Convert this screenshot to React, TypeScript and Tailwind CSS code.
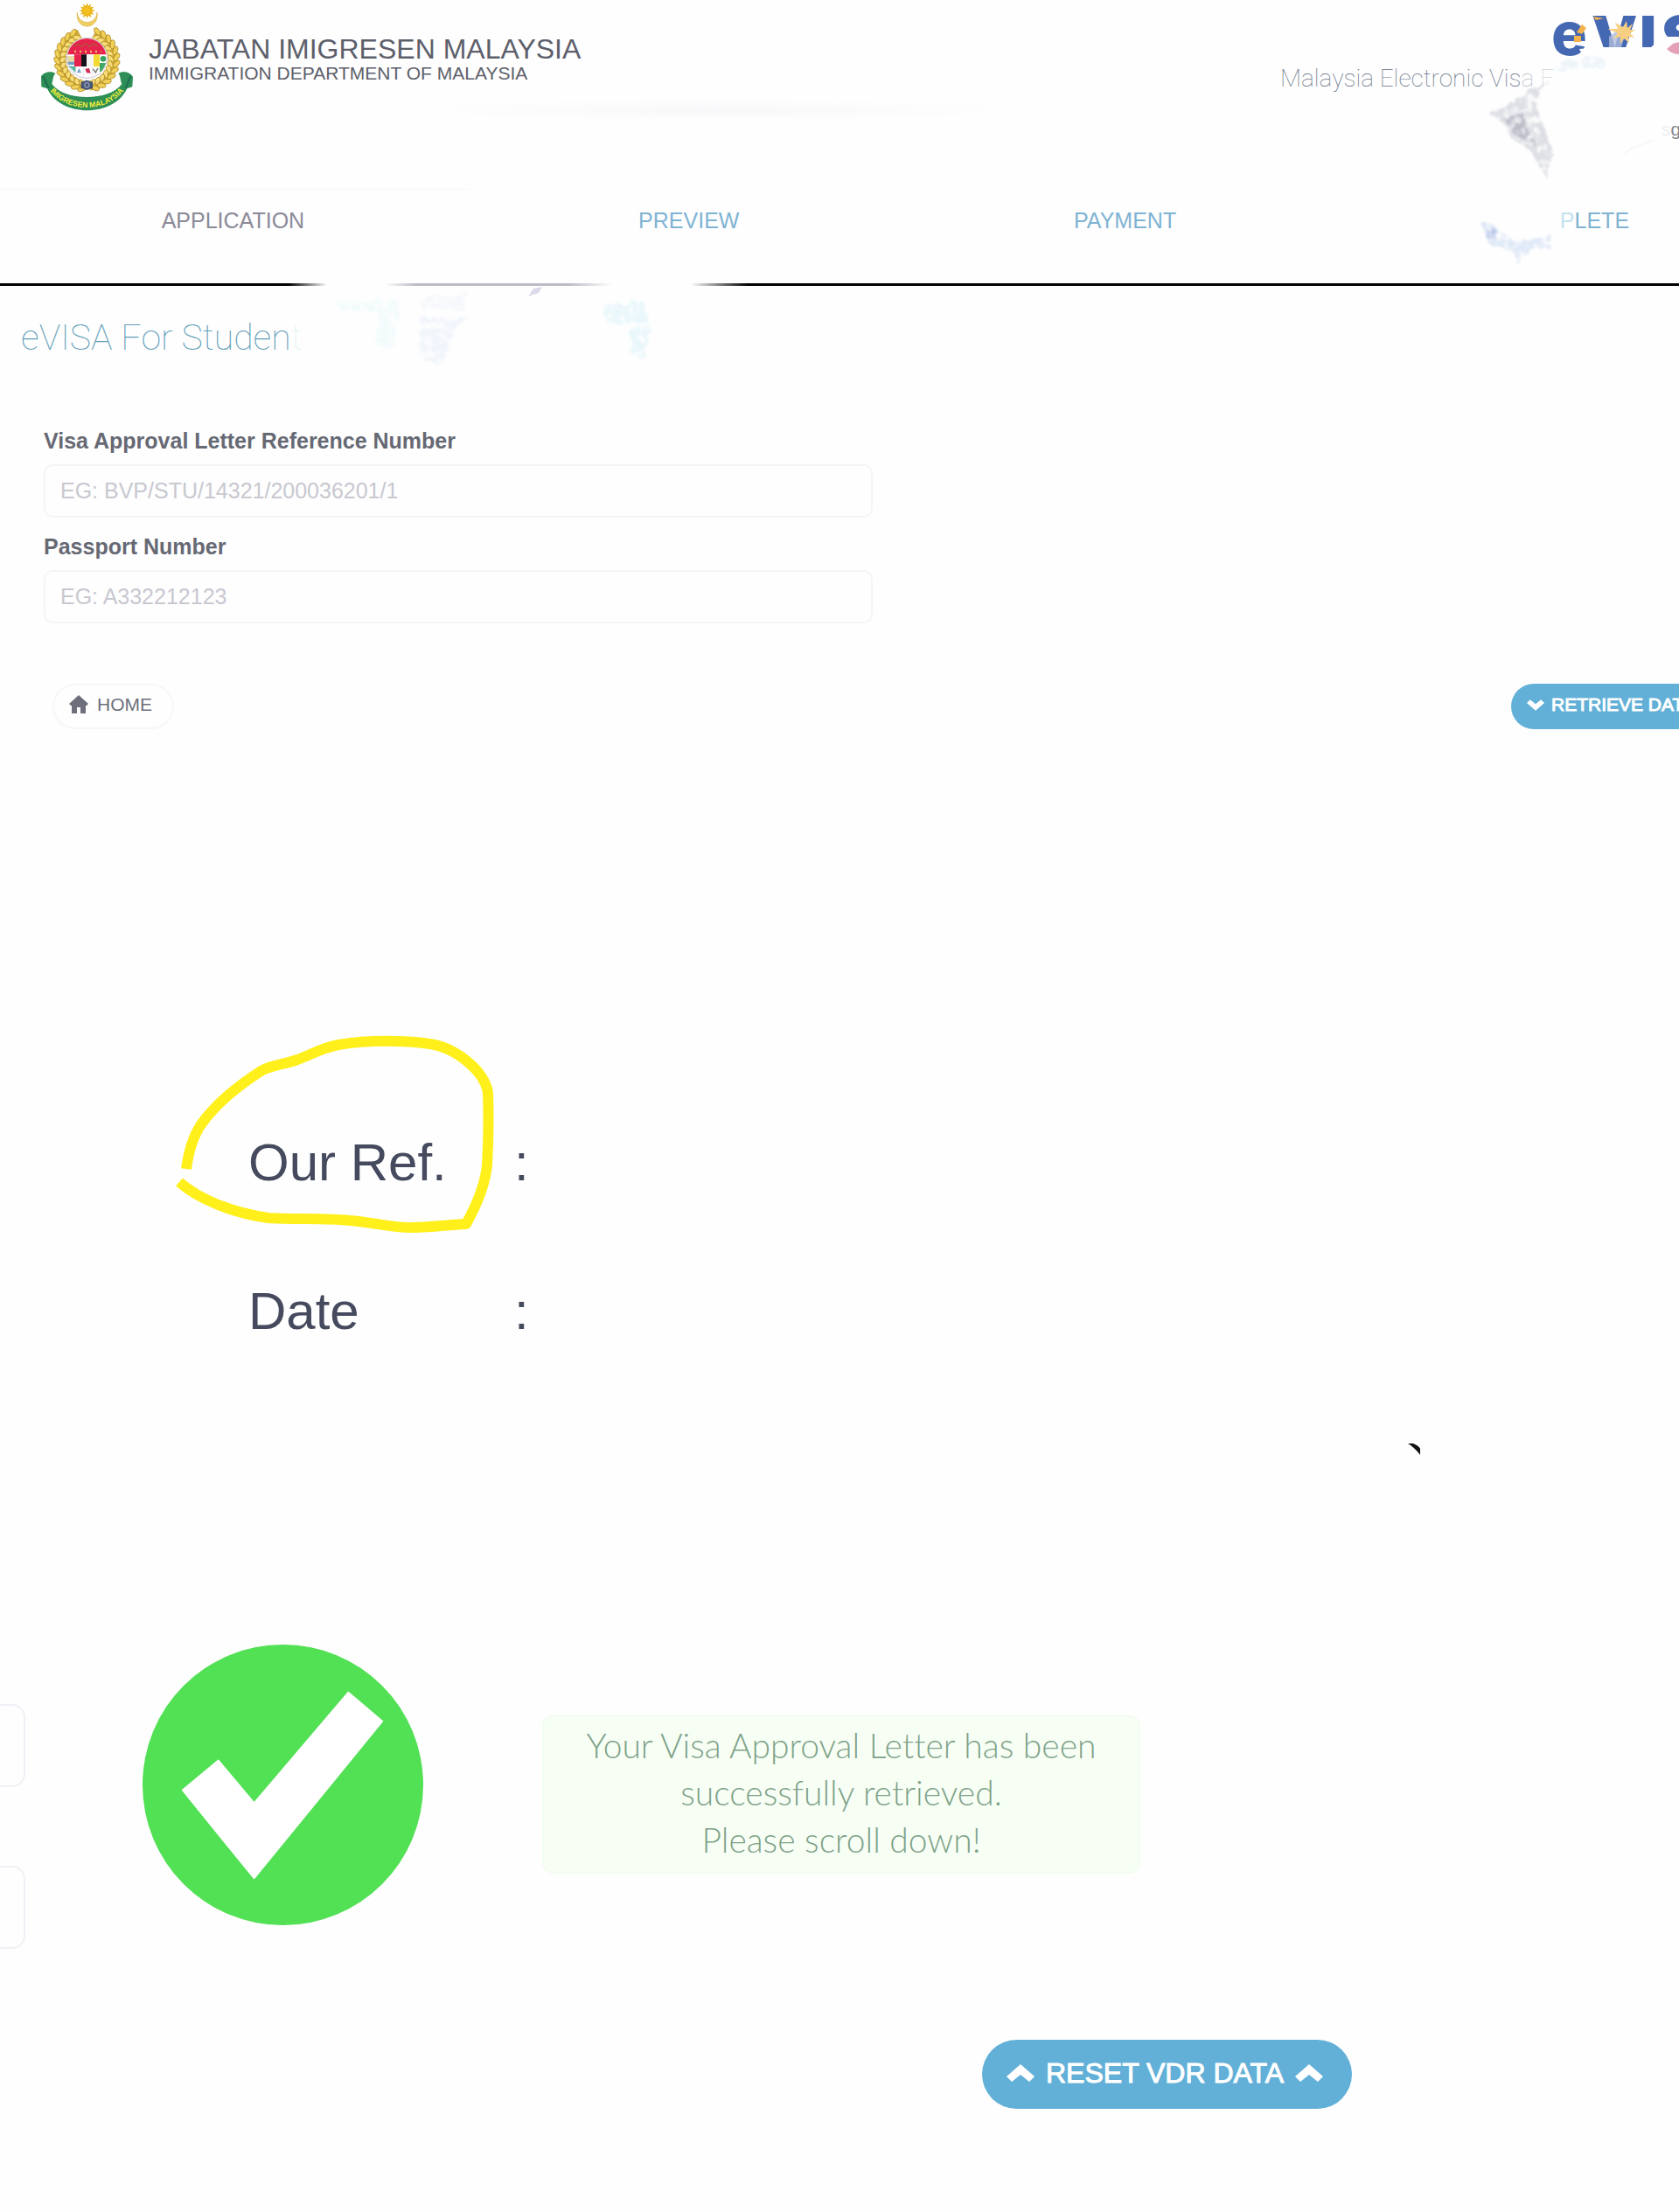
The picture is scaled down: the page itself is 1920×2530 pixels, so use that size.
import type { ReactNode } from "react";

type Step = {
  label: ReactNode;
  className: string;
};

const steps: Step[] = [
  { label: "APPLICATION", className: "text-[#8b8a98]" },
  { label: "PREVIEW", className: "text-[#7fb3d3]" },
  { label: "PAYMENT", className: "text-[#7fb3d3]" },
  {
    label: (
      <>
        <span className="text-[#c4e2ee]">P</span>LETE
      </>
    ),
    className: "pl-[62px] text-[#7fb3d3]"
  }
];

const fields = [
  {
    id: "reference",
    label: "Visa Approval Letter Reference Number",
    placeholder: "EG: BVP/STU/14321/200036201/1"
  },
  {
    id: "passport",
    label: "Passport Number",
    placeholder: "EG: A332212123"
  }
];

const letterRows = ["Our Ref.", "Date"];

// degrees, clockwise from the top, leaving the wreath open under the crescent
const leafAngles = [
  24, 37, 50, 63, 76, 89, 102, 115, 128, 141, 154, 167, 193, 206, 219, 232, 245,
  258, 271, 284, 297, 310, 323, 336
];

const rayAngles = [0, 30, 60, 90, 120, 150, 180, 210, 240, 270, 300, 330];

function Emblem() {
  return (
    <svg
      aria-label="Imigresen Malaysia"
      className="h-[140px] w-[140px] shrink-0"
      role="img"
      viewBox="0 0 420 420"
    >
      <defs>
        <clipPath id="shield">
          <circle cx="208" cy="199" r="67" />
        </clipPath>
        <path d="M66 288C124 396 292 396 350 288" id="motto" />
      </defs>
      <path
        d="M175 43C166 106 252 106 243 43C240 88 178 88 175 43Z"
        fill="#f0cf62"
        stroke="#d9b040"
        strokeWidth="2"
      />
      <circle cx="209" cy="37" fill="#f3c01f" r="15" />
      {rayAngles.map((angle) => (
        <path
          d="M203 25L209 10L215 25Z"
          fill="#eab61c"
          key={angle}
          transform={`rotate(${angle} 209 37)`}
        />
      ))}
      {leafAngles.map((angle) => (
        <g key={angle} transform={`rotate(${angle} 208 204)`}>
          <rect fill="#d3ab38" height="32" width="26" x="195" y="98" />
          <ellipse
            cx="202"
            cy="102"
            fill="#efcf55"
            rx="15"
            ry="8"
            stroke="#a37d1c"
            strokeWidth="2"
            transform={angle < 180 ? "rotate(32 202 102)" : "rotate(-32 202 102)"}
          />
          <ellipse
            cx="208"
            cy="122"
            fill="#f6dd78"
            rx="14"
            ry="8"
            stroke="#a8841f"
            strokeWidth="2"
            transform={angle < 180 ? "rotate(-32 208 122)" : "rotate(32 208 122)"}
          />
        </g>
      ))}
      <circle cx="208" cy="199" fill="#fff" r="69" stroke="#c9c4ce" strokeWidth="3" />
      <g clipPath="url(#shield)">
        <path d="M140 130H276V187H140Z" fill="#e6224d" />
        <path d="M165 160L178 150L190 161L203 148L217 160L232 149L246 160" fill="none" stroke="#b5563f" strokeWidth="4" />
        <path d="M165 177H257" stroke="#f0b35f" strokeDasharray="6 12" strokeWidth="7" />
        <path d="M140 192H165V222H140Z" fill="#e9d9a4" />
        <path d="M140 212H165V222H140Z" fill="#6f9ecb" />
        <path d="M165 187H189V228H165Z" fill="#e6224d" />
        <path d="M189 187H207V228H189Z" fill="#16121a" />
        <path d="M207 187H231V228H207Z" fill="#f6f5f2" />
        <path d="M231 187H252V228H231Z" fill="#f6d930" />
        <circle cx="264" cy="202" fill="#36a35c" r="10" />
        <path d="M252 216H276V246H252Z" fill="#3fa864" />
        <path d="M144 226L170 250V228Z" fill="#58b6a3" />
        <path d="M174 250L181 233L189 250Z" fill="#7ea2cf" />
        <path d="M202 236L216 234L221 251L207 250Z" fill="#cf2f56" />
        <path d="M229 236L238 249L246 234" fill="none" stroke="#8b8d86" strokeWidth="5" />
        <path d="M170 228V270M197 228V270M226 228V270" stroke="#d8d8de" strokeWidth="2" />
      </g>
      <path d="M188 280H228V304H188Z" fill="#3d4a68" />
      <circle cx="208" cy="292" fill="#4b5a7a" r="17" />
      <circle cx="208" cy="292" fill="none" r="8" stroke="#b4bfd3" strokeWidth="3" />
      <path
        d="M51 262C60 246 88 242 100 252C92 258 92 276 88 288C130 348 286 348 328 288C322 276 324 258 316 252C328 242 358 246 366 264L364 298L346 304C300 404 118 404 72 304L52 298Z"
        fill="#2d8f55"
      />
      <path d="M58 262C68 272 64 286 78 302M358 262C350 272 352 286 340 302" fill="none" stroke="#1f6b52" strokeWidth="6" />
      <text
        className="font-['Liberation_Sans'] font-bold"
        fill="#f2ee3c"
        fontSize="26"
      >
        <textPath href="#motto" startOffset="50%" textAnchor="middle">
          IMIGRESEN MALAYSIA
        </textPath>
      </text>
    </svg>
  );
}

function EvisaLogo() {
  return (
    <svg
      aria-label="eVISA"
      className="ml-[312px] h-[70px] w-[180px]"
      role="img"
      viewBox="0 0 180 70"
    >
      <defs>
        <clipPath id="logo-cut">
          <path d="M40 0H180V42H126L112 54H40Z" />
        </clipPath>
      </defs>
      <text className="font-['Inter'] font-extrabold" fill="#4568b2" fontSize="68" x="-2" y="63">
        e
      </text>
      <path d="M27 37L33 28L38 32L33 39Z" fill="#f3b24c" />
      <path d="M24 41H32V48H24Z" fill="#f3b24c" />
      <path d="M30 56L42 55L38 63L32 60Z" fill="#fefefe" />
      <g clipPath="url(#logo-cut)">
        <g className="font-['Inter'] font-black" fill="#4568b2" fontSize="66">
          <text x="44" y="66">
            V
          </text>
          <text x="99" y="66">
            I
          </text>
          <text x="124" y="66">
            S
          </text>
        </g>
        <path d="M64 42L80 30L84 34L78 54H64Z" fill="#aebbdc" opacity="0.8" />
        <path
          d="M84 24L85 32L91 27L88 34L94 34L88 38L93 43L86 42L87 49L81 44L77 50L77 42L69 44L74 38L62 33L74 33L71 26L80 31Z"
          fill="#f7cf83"
        />
        <path d="M46 19L58 21L49 23Z" fill="#f3b24c" />
      </g>
      <path d="M130 56L137 50L144 48V62Q136 62 130 56Z" fill="#e3a0b6" />
    </svg>
  );
}

function Smudges() {
  return (
    <svg
      aria-hidden="true"
      className="pointer-events-none absolute top-0 right-0 h-[320px] w-[500px]"
      viewBox="0 0 500 320"
    >
      <defs>
        <filter id="rough" x="-20%" y="-20%" width="140%" height="140%">
          <feTurbulence baseFrequency="0.12" numOctaves="4" result="noise" seed="4" type="fractalNoise" />
          <feDisplacementMap in="SourceGraphic" in2="noise" result="torn" scale="10" />
          <feColorMatrix in="noise" result="holes" values="0 0 0 0 0  0 0 0 0 0  0 0 0 0 0  3 0 0 0 -0.7" />
          <feComposite in="torn" in2="holes" operator="in" />
          <feGaussianBlur stdDeviation="1" />
        </filter>
      </defs>
      <g filter="url(#rough)">
        <path d="M284 132L350 92L334 118L356 172L348 204L330 172L308 158L298 140Z" fill="#d2d4db" opacity="0.75" />
        <path d="M300 136L320 128L336 168L312 154Z" fill="#a4a7b5" opacity="0.6" />
        <path d="M352 82L375 68L412 64L416 76Z" fill="#e8f2f8" opacity="0.8" />
        <path d="M272 254L288 258L312 276L354 268L352 284L330 286L316 304L310 288L284 280Z" fill="#dbe7f6" opacity="0.9" />
        <path d="M278 258L290 262L294 272L280 272Z" fill="#b4c2e6" opacity="0.8" />
      </g>
      <path d="M436 176L446 170L470 160" fill="none" stroke="#f8f8fb" strokeWidth="2" />
    </svg>
  );
}

function TitleSmudges() {
  return (
    <svg
      aria-hidden="true"
      className="pointer-events-none absolute top-0 left-[370px] h-[110px] w-[390px]"
      viewBox="0 0 390 110"
    >
      <g filter="url(#rough)">
        <path d="M16 18L86 16L80 72L60 68L64 30L20 28Z" fill="#f2fbfc" />
        <path d="M110 12L166 8L160 28L112 26Z" fill="#f6f8fc" />
        <path d="M112 36H170L152 46L136 90L108 84Z" fill="#f1f5fb" />
        <path d="M318 22L366 18L374 50L366 84L352 78L350 44L324 42Z" fill="#e9f7fb" />
      </g>
      <path d="M234 12L240 3L250 1L246 8Z" fill="#dcdae8" />
    </svg>
  );
}

function Chevron({ className }: { className: string }) {
  return (
    <svg aria-hidden="true" className={className} viewBox="0 0 32 20">
      <path d="M16 0L32 14L26 20L16 12L6 20L0 14Z" fill="currentColor" />
    </svg>
  );
}

function HomeIcon() {
  return (
    <svg aria-hidden="true" className="h-[22px] w-[22px]" viewBox="0 0 22 22">
      <path
        d="M11 0L22 10L20 12H19V21H13V14H9V21H3V12H2L0 10Z"
        fill="currentColor"
      />
    </svg>
  );
}

function Header() {
  return (
    <header className="flex h-[216px] pl-[30px]">
      <Emblem />
      <div className="pt-10 text-[#5d606b]">
        <h1 className="text-[32px] leading-8 whitespace-nowrap">JABATAN IMIGRESEN MALAYSIA</h1>
        <p className="text-[21px] leading-6 whitespace-nowrap">IMMIGRATION DEPARTMENT OF MALAYSIA</p>
        <div className="mt-[18px] ml-[300px] h-6 w-[700px] bg-[radial-gradient(closest-side,#f8f8fa,transparent)]" />
      </div>
      <div className="ml-auto w-[456px] shrink-0">
        <EvisaLogo />
        <p className="font-['Roboto'] text-[28px] leading-10 font-thin whitespace-nowrap text-[#6b7488]">
          Malaysia Electronic Vis<span className="text-[#b9bec9]">a</span>{" "}
          <span className="text-[#d4d8e0]">F</span>
        </p>
        <p className="mt-6 pl-[436px] text-[21px] leading-7 text-[#eeeef1]">
          s<span className="text-[#85868f]">g</span>
        </p>
      </div>
    </header>
  );
}

function StepNav() {
  return (
    <nav className="h-[108px]">
      <div className="h-px w-[28%] bg-[#f7f7f8]" />
      <ol className="grid w-[107%] grid-cols-[533fr_510fr_488fr_524fr] pt-5 text-center text-[25px] leading-[30px]">
        {steps.map((step, index) => (
          <li className={step.className} key={index}>
            <a href="#step">{step.label}</a>
          </li>
        ))}
      </ol>
    </nav>
  );
}

function RetrieveForm() {
  return (
    <form>
      <div className="mt-[79px] flex w-[52%] flex-col gap-[18px] pl-[50px]">
        {fields.map((field) => (
          <div className="flex flex-col gap-3" key={field.id}>
            <label className="text-[25px] leading-[30px] font-bold text-[#666974]" htmlFor={field.id}>
              {field.label}
            </label>
            <input
              className="h-[61px] rounded-[10px] border-2 border-[#f5f5f7] px-[17px] text-[25px] text-[#666974] outline-none placeholder:text-[#c8c8d0]"
              id={field.id}
              placeholder={field.placeholder}
              type="text"
            />
          </div>
        ))}
      </div>
      <div className="mt-[69px] flex justify-between pl-[60px]">
        <button
          className="flex h-[52px] w-[139px] items-center gap-[10px] rounded-full border-2 border-[#f7f7f9] px-[17px] pb-1 text-[21px] text-[#6d707c]"
          type="button"
        >
          <HomeIcon />
          HOME
        </button>
        <button
          className="-mr-[38px] flex h-[52px] w-[230px] items-center gap-2 rounded-full bg-[#62b0d7] pb-1 pl-[18px] text-[21px] whitespace-nowrap text-white [-webkit-text-stroke:1px]"
          type="button"
        >
          <Chevron className="h-[13px] w-5 shrink-0 rotate-180" />
          RETRIEVE DATA
        </button>
      </div>
    </form>
  );
}

function LetterExcerpt() {
  return (
    <section className="relative mt-[462px] pl-[284px]">
      <dl className="flex flex-col gap-[102px] text-[60px] leading-[68px] text-[#454a5e]">
        {letterRows.map((row) => (
          <div className="grid grid-cols-[304px_auto]" key={row}>
            <dt>{row}</dt>
            <dd>:</dd>
          </div>
        ))}
      </dl>
      <svg
        aria-hidden="true"
        className="absolute -top-[146px] left-[180px] h-[280px] w-[400px]"
        viewBox="0 0 400 280"
      >
        <path
          d="M33 187C36 164 42 148 50 136C70 108 98 88 120 74C132 68 146 67 160 62C178 55 190 48 207 45C240 39 285 40 312 44C340 48 374 74 378 100C379 130 379 150 377 182C375 205 363 232 353 250C330 251 310 254 290 254C268 254 246 248 220 246C190 243 160 245 127 243C85 237 48 222 25 202"
          fill="none"
          stroke="#fff01c"
          strokeLinejoin="round"
          strokeWidth="12"
        />
      </svg>
    </section>
  );
}

function RetrievedNotice() {
  return (
    <section className="mt-[217px] flex items-start">
      <div className="flex w-[29px] shrink-0 flex-col gap-[90px] pt-[68px]">
        <input
          aria-label="Reference number"
          className="-ml-[31px] h-[95px] w-[60px] rounded-[15px] border-2 border-[#f1f0f6]"
          type="text"
        />
        <input
          aria-label="Passport number"
          className="-ml-[31px] h-[95px] w-[60px] rounded-[15px] border-2 border-[#f1f0f6]"
          type="text"
        />
      </div>
      <svg
        aria-hidden="true"
        className="ml-[134px] h-[321px] w-[321px] shrink-0"
        viewBox="0 0 322 322"
      >
        <circle cx="161" cy="161" fill="#52e054" r="161" />
        <path
          d="M46 167L87 133L128 182L236 55L275 88L128 268Z"
          fill="#fff"
          stroke="#fff"
          strokeLinejoin="round"
          strokeWidth="2"
        />
      </svg>
      <p className="mt-[81px] ml-[136px] w-[684px] rounded-[12px] border-2 border-[#f3fdf1] bg-[#f7fff5] pt-[5px] pb-[10px] text-center font-['Lato'] text-[39px] leading-[54px] font-light text-[#7fa289] [font-variant-ligatures:none]">
        Your Visa Approval Letter has been
        <br />
        successfully retrieved.
        <br />
        Please scroll down!
      </p>
    </section>
  );
}

export default function App() {
  return (
    <div className="relative w-full overflow-hidden bg-[#fefefe] pb-[118px] font-['Liberation_Sans',Arial,sans-serif]">
      <Header />
      <StepNav />
      <div className="h-[3px] bg-[linear-gradient(90deg,#000_330px,transparent_374px,transparent_440px,#bdbbc6_475px,#bdbbc6_650px,transparent_700px,transparent_790px,#000_855px)]" />
      <main>
        <div className="relative pt-[35px] pl-6">
          <h2 className="font-['Roboto'] text-[41px] leading-[48px] font-thin text-[#5f9db8]">
            eVISA For Studen<span className="text-[#e6f1f4]">t</span>
          </h2>
          <TitleSmudges />
        </div>
        <RetrieveForm />
        <LetterExcerpt />
        <svg
          aria-hidden="true"
          className="mt-[117px] ml-[1610px] h-[13px] w-[14px]"
          viewBox="0 0 14 13"
        >
          <path d="M0 0H6Q13 3 14 6V13Q7 4 0 0Z" fill="#111" />
        </svg>
        <RetrievedNotice />
        <div className="mt-[104px] pl-[1123px]">
          <button
            className="flex h-[79px] w-[423px] items-center gap-[13px] rounded-full bg-[#62b0d7] pb-1 pl-7 text-[32px] whitespace-nowrap text-white [-webkit-text-stroke:1px]"
            type="button"
          >
            <Chevron className="h-5 w-8" />
            RESET VDR DATA
            <Chevron className="h-5 w-8" />
          </button>
        </div>
      </main>
      <Smudges />
    </div>
  );
}
